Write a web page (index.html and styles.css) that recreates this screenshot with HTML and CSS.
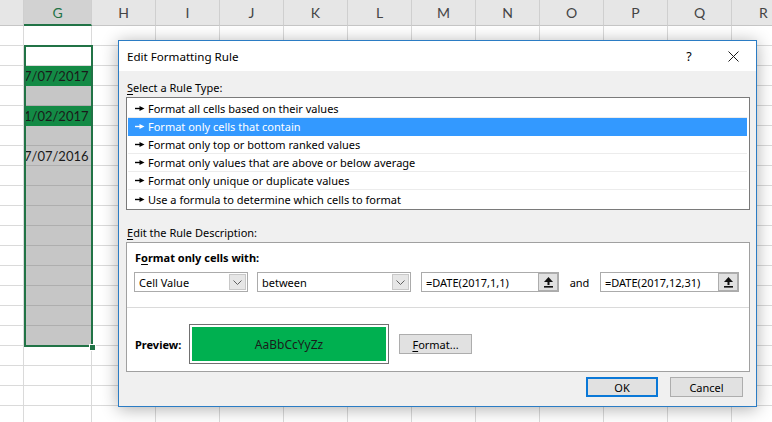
FILE: index.html
```html
<!DOCTYPE html>
<html>
<head>
<meta charset="utf-8">
<link rel="stylesheet" href="styles.css">
</head>
<body>
<div class="sheet">
  <div class="col f"><div class="hdr"></div><div class="cells"></div></div>
  <div class="col g">
    <div class="hdr active">G</div>
    <div class="gcells">
      <div class="cell"></div>
      <div class="cell cur"></div>
      <div class="cell hl">7/07/2017</div>
      <div class="cell s"></div>
      <div class="cell hl">1/02/2017</div>
      <div class="cell s"></div>
      <div class="cell s">7/07/2016</div>
      <div class="cell s"></div>
      <div class="cell s"></div>
      <div class="cell s"></div>
      <div class="cell s"></div>
      <div class="cell s"></div>
      <div class="cell s"></div>
      <div class="cell s"></div>
      <div class="cell s"></div>
      <div class="cell s"></div>
      <div class="cell"></div>
      <div class="cell"></div>
      <div class="cell"></div>
      <div class="cell"></div>
      <div class="selection"></div>
      <div class="handle"></div>
    </div>
  </div>
  <div class="col"><div class="hdr">H</div><div class="cells"></div></div>
  <div class="col"><div class="hdr">I</div><div class="cells"></div></div>
  <div class="col"><div class="hdr">J</div><div class="cells"></div></div>
  <div class="col"><div class="hdr">K</div><div class="cells"></div></div>
  <div class="col"><div class="hdr">L</div><div class="cells"></div></div>
  <div class="col"><div class="hdr">M</div><div class="cells"></div></div>
  <div class="col"><div class="hdr">N</div><div class="cells"></div></div>
  <div class="col"><div class="hdr">O</div><div class="cells"></div></div>
  <div class="col"><div class="hdr">P</div><div class="cells"></div></div>
  <div class="col"><div class="hdr">Q</div><div class="cells"></div></div>
  <div class="col"><div class="hdr">R</div><div class="cells"></div></div>
</div>

<div class="dialog">
  <div class="titlebar">
    <span class="title">Edit Formatting Rule</span>
    <span class="help">?</span>
    <svg class="close" width="11" height="11" viewBox="0 0 11 11"><path d="M0.5 0.5L10.5 10.5M10.5 0.5L0.5 10.5" stroke="#1a1a1a" stroke-width="1" fill="none"/></svg>
  </div>
  <div class="body">
    <div class="label first"><u>S</u>elect a Rule Type:</div>
    <div class="listbox">
      <div class="item"><svg class="arr" width="10" height="7" viewBox="0 0 10 7"><path d="M0 3.5H5" stroke="currentColor" stroke-width="1.4"/><path d="M4.5 1L9.5 3.5L4.5 6Z" fill="currentColor"/></svg>Format all cells based on their values</div>
      <div class="item sel"><svg class="arr" width="10" height="7" viewBox="0 0 10 7"><path d="M0 3.5H5" stroke="currentColor" stroke-width="1.4"/><path d="M4.5 1L9.5 3.5L4.5 6Z" fill="currentColor"/></svg>Format only cells that contain</div>
      <div class="item"><svg class="arr" width="10" height="7" viewBox="0 0 10 7"><path d="M0 3.5H5" stroke="currentColor" stroke-width="1.4"/><path d="M4.5 1L9.5 3.5L4.5 6Z" fill="currentColor"/></svg>Format only top or bottom ranked values</div>
      <div class="item"><svg class="arr" width="10" height="7" viewBox="0 0 10 7"><path d="M0 3.5H5" stroke="currentColor" stroke-width="1.4"/><path d="M4.5 1L9.5 3.5L4.5 6Z" fill="currentColor"/></svg>Format only values that are above or below average</div>
      <div class="item"><svg class="arr" width="10" height="7" viewBox="0 0 10 7"><path d="M0 3.5H5" stroke="currentColor" stroke-width="1.4"/><path d="M4.5 1L9.5 3.5L4.5 6Z" fill="currentColor"/></svg>Format only unique or duplicate values</div>
      <div class="item last"><svg class="arr" width="10" height="7" viewBox="0 0 10 7"><path d="M0 3.5H5" stroke="currentColor" stroke-width="1.4"/><path d="M4.5 1L9.5 3.5L4.5 6Z" fill="currentColor"/></svg>Use a formula to determine which cells to format</div>
    </div>
    <div class="label second"><u>E</u>dit the Rule Description:</div>
    <div class="desc">
      <div class="bold heading">F<u>o</u>rmat only cells with:</div>
      <div class="controls">
        <div class="combo c1"><span class="val">Cell Value</span><span class="drop"><svg width="9" height="5" viewBox="0 0 9 5"><path d="M0.5 0.5L4.5 4.5L8.5 0.5" stroke="#606060" fill="none"/></svg></span></div>
        <div class="combo c2"><span class="val">between</span><span class="drop"><svg width="9" height="5" viewBox="0 0 9 5"><path d="M0.5 0.5L4.5 4.5L8.5 0.5" stroke="#606060" fill="none"/></svg></span></div>
        <div class="input i1"><span class="val">=DATE(2017,1,1)</span><span class="ref"><svg width="9" height="11" viewBox="0 0 9 11"><path d="M4.5 0L9 5H0Z" fill="#111"/><rect x="3.5" y="4" width="2" height="4" fill="#111"/><rect x="0" y="9" width="9" height="1.6" fill="#111"/></svg></span></div>
        <span class="and">and</span>
        <div class="input i2"><span class="val">=DATE(2017,12,31)</span><span class="ref"><svg width="9" height="11" viewBox="0 0 9 11"><path d="M4.5 0L9 5H0Z" fill="#111"/><rect x="3.5" y="4" width="2" height="4" fill="#111"/><rect x="0" y="9" width="9" height="1.6" fill="#111"/></svg></span></div>
      </div>
      <div class="sep"></div>
      <div class="preview-row">
        <span class="bold plabel">Preview:</span>
        <div class="preview"><div class="swatch">AaBbCcYyZz</div></div>
        <button class="btn fmt"><u>F</u>ormat...</button>
      </div>
    </div>
    <div class="actions">
      <button class="btn ok">OK</button>
      <button class="btn cancel">Cancel</button>
    </div>
  </div>
</div>
</body>
</html>
```

FILE: styles.css
```css
* { box-sizing: border-box; }
html, body { margin: 0; padding: 0; }
body {
  width: 772px;
  height: 422px;
  overflow: hidden;
  position: relative;
  background: #fff;
  font-family: "Noto Sans", "Liberation Sans", sans-serif;
}

/* spreadsheet */
.sheet { display: flex; width: 772px; height: 422px; overflow: hidden; }
.col { width: 64px; flex: none; }
.col.f { width: 24px; }
.col.g { width: 68px; }
.hdr {
  height: 26px;
  background: #e6e6e6;
  border-bottom: 1px solid #c6c6c6;
  border-right: 1px solid #cfcfcf;
  text-align: center;
  font-family: Lato, "Liberation Sans", sans-serif;
  font-size: 14px;
  line-height: 25px;
  color: #444;
}
.hdr.active {
  background: #d2d2d2;
  color: #217346;
  border-bottom: 2px solid #217346;
}
.cells {
  height: 396px;
  border-right: 1px solid #dadada;
  background: repeating-linear-gradient(to bottom, transparent 0 19px, #dadada 19px 20px);
}
.gcells {
  position: relative;
  height: 396px;
  border-right: 1px solid #dadada;
}
.cell {
  height: 20px;
  border-bottom: 1px solid #dadada;
  text-align: right;
  padding-right: 3px;
  font-family: Lato, "Liberation Sans", sans-serif;
  font-size: 13px;
  line-height: 21px;
  color: #1a1a1a;
}
.cell.s { background: #c6c6c6; border-bottom-color: #aeaeae; }
.cell.hl { background: #138a45; border-bottom-color: #138a45; }
.selection {
  position: absolute;
  left: 0;
  top: 19px;
  width: 69px;
  height: 302px;
  border: 2px solid #217346;
}
.handle {
  position: absolute;
  left: 65px;
  top: 318px;
  width: 7px;
  height: 7px;
  background: #217346;
  border: 1px solid #fff;
}

/* dialog */
.dialog {
  position: absolute;
  left: 118px;
  top: 40px;
  width: 639px;
  height: 367px;
  background: #f0f0f0;
  border: 1px solid #2b7cc4;
  box-shadow: 0 2px 16px rgba(0, 0, 0, 0.32);
  font-size: 11px;
  color: #000;
}
.titlebar {
  height: 30px;
  background: #fff;
  display: flex;
  align-items: center;
  padding-left: 8px;
}
.title { font-size: 11.6px; color: #000; }
.help { margin-left: auto; width: 14px; text-align: center; font-size: 12.5px; margin-right: 32px; }
.close { margin-right: 17px; }

.body { padding: 0 6px 0 7px; }
.label { height: 26px; padding-top: 9px; line-height: 16px; padding-left: 1px; }
.label.second { height: 32px; padding-top: 15px; }
u { text-decoration-thickness: 1px; text-underline-offset: 2px; }

.listbox {
  height: 113px;
  border: 1px solid #7a7a7a;
  background: #fff;
  padding: 2px 2px 0 1px;
}
.item {
  height: 18px;
  display: flex;
  align-items: center;
  padding-left: 7px;
  border-bottom: 1px solid #ececec;
  color: #000;
  white-space: nowrap;
}
.item.last { border-bottom: none; }
.item.sel { background: #3399ff; color: #fff; border-bottom-color: #3399ff; }
.arr { margin-right: 3px; color: #000; flex: none; }
.item.sel .arr { color: #fff; }

.desc {
  height: 130px;
  border: 1px solid #a0a0a0;
  background: #fff;
}
.bold { font-weight: bold; }
.heading { padding: 7px 0 0 8px; line-height: 16px; height: 29px; }
.controls {
  display: flex;
  align-items: center;
  height: 20px;
  padding-left: 7px;
}
.combo, .input {
  height: 20px;
  border: 1px solid #ababab;
  background: #fff;
  display: flex;
  align-items: center;
  flex: none;
}
.val { padding-left: 4px; flex: 1; white-space: nowrap; }
.combo.c1 { width: 114px; }
.combo.c2 { width: 154px; margin-left: 9px; }
.drop {
  width: 17px;
  height: 16px;
  margin-right: 1px;
  background: #e6e6e6;
  border: 1px solid #c8c8c8;
  display: flex;
  align-items: center;
  justify-content: center;
}
.input.i1 { width: 138px; margin-left: 10px; }
.input.i2 { width: 139px; }
.ref {
  width: 20px;
  height: 18px;
  background: #e1e1e1;
  border: 1px solid #adadad;
  display: flex;
  align-items: center;
  justify-content: center;
}
.and { width: 41px; text-align: center; }
.sep { height: 1px; background: #dadada; margin-top: 15px; }
.preview-row {
  display: flex;
  align-items: center;
  margin-top: 16px;
  padding-left: 8px;
}
.plabel { width: 54px; }
.preview {
  width: 200px;
  height: 40px;
  border: 1px solid #707070;
  padding: 2px;
  background: #fff;
}
.swatch {
  height: 100%;
  background: #00b050;
  color: #1b1b1b;
  font-size: 12px;
  display: flex;
  align-items: center;
  justify-content: center;
}
.btn {
  font-family: "Noto Sans", "Liberation Sans", sans-serif;
  font-size: 11px;
  height: 20px;
  width: 73px;
  padding: 0;
  background: #e1e1e1;
  border: 1px solid #adadad;
  color: #000;
}
.btn.fmt { margin-left: 10px; }
.actions {
  display: flex;
  justify-content: flex-end;
  gap: 12px;
  margin-top: 5px;
  padding-right: 7px;
}
.btn.ok { width: 72px; border: 2px solid #0a78d7; }
.btn.cancel { width: 73px; }
```
